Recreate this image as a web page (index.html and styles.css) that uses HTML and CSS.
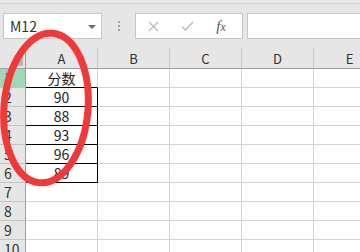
FILE: index.html
```html
<!DOCTYPE html>
<html lang="zh-CN">
<head>
  <meta charset="UTF-8" />
  <title>分数</title>
  <link rel="stylesheet" href="styles.css">
</head>
<body>
  <div class="toolbar">
    <div class="bar">
      <div class="namebox"><span>M12</span><span class="caret"></span></div>
      <div class="grip"><i></i><i></i><i></i></div>
      <div class="fxbox">
        <span class="btn">
          <svg width="11" height="11" viewBox="0 0 11 11"><path d="M1 1L10 10M10 1L1 10" stroke="#b9b9b9" stroke-width="1.3" fill="none"/></svg>
        </span>
        <span class="btn">
          <svg width="13" height="10" viewBox="0 0 13 10"><path d="M1 5.5L4.5 9L12 1" stroke="#b9b9b9" stroke-width="1.4" fill="none"/></svg>
        </span>
        <span class="btn fx"><em>f</em><em class="x">x</em></span>
      </div>
      <div class="formula"></div>
    </div>
  </div>

  <div class="sheet">
    <div class="corner"><span class="tri"></span></div>
    <div class="hd">A</div><div class="hd">B</div><div class="hd">C</div><div class="hd">D</div><div class="hd">E</div>

    <div class="rh on">1</div><div class="c bb">分数</div><div class="c"></div><div class="c"></div><div class="c"></div><div class="c"></div>
    <div class="rh">2</div><div class="c bx">90</div><div class="c"></div><div class="c"></div><div class="c"></div><div class="c"></div>
    <div class="rh">3</div><div class="c bx">88</div><div class="c"></div><div class="c"></div><div class="c"></div><div class="c"></div>
    <div class="rh">4</div><div class="c bx">93</div><div class="c"></div><div class="c"></div><div class="c"></div><div class="c"></div>
    <div class="rh">5</div><div class="c bx">96</div><div class="c"></div><div class="c"></div><div class="c"></div><div class="c"></div>
    <div class="rh">6</div><div class="c bx">89</div><div class="c"></div><div class="c"></div><div class="c"></div><div class="c"></div>
    <div class="rh">7</div><div class="c"></div><div class="c"></div><div class="c"></div><div class="c"></div><div class="c"></div>
    <div class="rh">8</div><div class="c"></div><div class="c"></div><div class="c"></div><div class="c"></div><div class="c"></div>
    <div class="rh">9</div><div class="c"></div><div class="c"></div><div class="c"></div><div class="c"></div><div class="c"></div>
    <div class="rh">10</div><div class="c"></div><div class="c"></div><div class="c"></div><div class="c"></div><div class="c"></div>
  </div>

  <!-- red hand-drawn ring over column A -->
  <svg class="mark" width="360" height="252" viewBox="0 0 360 252">
    <ellipse cx="46" cy="108" rx="42" ry="75" transform="rotate(5 46 108)" fill="none" stroke="#f03a3a" stroke-width="7"/>
  </svg>
</body>
</html>
```

FILE: styles.css
```css
:root {
  --chrome: #e6e6e6;
  --box-line: #c6c6c6;
  --grid: #d4d4d4;
  --head-line: #c4c4c4;
  --head-edge: #9e9e9e;
  --text: #222;
}
body {
  margin: 0;
  width: 360px;
  height: 252px;
  overflow: hidden;
  position: relative;
  background-color: var(--chrome);
  color: var(--text);
  font-family: "Noto Sans CJK SC", "Noto Sans", sans-serif;
}

/* ==== formula bar ==== */
.toolbar {
  padding-top: 3px;
}
.bar {
  display: flex;
  align-items: flex-start;
  height: 35px;
  padding-top: 9px;
  border-top: 1px solid #d6d6d6;
}
.namebox {
  box-sizing: border-box;
  width: 99px;
  height: 26px;
  margin-left: 3px;
  padding: 0 5px 0 6px;
  display: flex;
  align-items: center;
  justify-content: space-between;
  background: #fff;
  border: 1px solid var(--box-line);
  font-size: 14px;
  color: #333;
}
.caret {
  width: 0;
  height: 0;
  border-left: 4px solid transparent;
  border-right: 4px solid transparent;
  border-top: 4px solid #6e6e6e;
  margin-top: 1px;
}
.grip {
  width: 33px;
  height: 26px;
  display: flex;
  flex-direction: column;
  align-items: center;
  justify-content: center;
  gap: 2px;
}
.grip i {
  display: block;
  width: 2px;
  height: 2px;
  background: #a3a3a3;
}
.fxbox {
  box-sizing: border-box;
  width: 108px;
  height: 26px;
  display: flex;
  background: #fff;
  border: 1px solid var(--box-line);
}
.btn {
  flex: 1;
  display: flex;
  align-items: center;
  justify-content: center;
}
.fx {
  font-family: "Liberation Serif", serif;
  color: #555;
  font-size: 15px;
  padding-right: 4px;
}
.fx .x {
  font-size: 12px;
  margin-top: 3px;
}
.formula {
  flex: 1;
  height: 26px;
  box-sizing: border-box;
  margin-left: 4px;
  margin-right: -2px;
  background: #fff;
  border: 1px solid var(--box-line);
}

/* ==== sheet grid ==== */
.sheet {
  display: grid;
  grid-template-columns: 26px repeat(5, 72px);
  grid-template-rows: 21px repeat(10, 19px);
  background: #fff;
}
.sheet > div {
  box-sizing: border-box;
}
.corner {
  position: relative;
  background: var(--chrome);
  border-right: 1px solid var(--head-edge);
  border-bottom: 1px solid var(--head-edge);
}
.tri {
  position: absolute;
  right: 2px;
  bottom: 2px;
  width: 0;
  height: 0;
  border-left: 10px solid transparent;
  border-bottom: 10px solid #b4b4b4;
}
.hd {
  background: var(--chrome);
  border-right: 1px solid var(--head-line);
  border-bottom: 1px solid var(--head-edge);
  text-align: center;
  font-size: 13px;
  line-height: 21px;
  color: #333;
}
.rh {
  background: var(--chrome);
  border-right: 1px solid var(--head-edge);
  border-bottom: 1px solid var(--head-line);
  padding-left: 4px;
  font-size: 14px;
  line-height: 19px;
  color: #333;
}
.rh.on {
  background: #a3d6b9;
}
.c {
  border-right: 1px solid var(--grid);
  border-bottom: 1px solid var(--grid);
  text-align: center;
  font-size: 14px;
  line-height: 19px;
}
.c.bb {
  border-bottom-color: #000;
}
.c.bx {
  border-right-color: #000;
  border-bottom-color: #000;
}

.mark {
  position: absolute;
  left: 0;
  top: 0;
  pointer-events: none;
}
```
